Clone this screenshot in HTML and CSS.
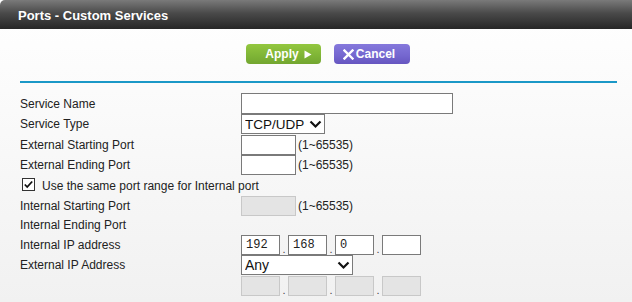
FILE: index.html
```html
<!DOCTYPE html>
<html>
<head>
<meta charset="utf-8">
<link rel="stylesheet" href="styles.css">
</head>
<body>
<div class="header"><span class="title">Ports - Custom Services</span></div>
<div class="content">
  <div class="buttons">
    <button class="btn apply">Apply <svg class="tri" width="8" height="9" viewBox="0 0 8 9"><path d="M0.5 0.5 L7.5 4.5 L0.5 8.5 Z" fill="#fff"/></svg></button>
    <button class="btn cancel"><svg class="x" width="11" height="11" viewBox="0 0 11 11"><path d="M1.5 1.5 L9.5 9.5 M9.5 1.5 L1.5 9.5" stroke="#fff" stroke-width="2.4" stroke-linecap="square"/></svg>Cancel</button>
  </div>
  <div class="rule"></div>
  <div class="form">
    <div class="row r21"><span class="label">Service Name</span><input class="text wide" type="text"></div>
    <div class="row"><span class="label">Service Type</span>
      <span class="sel-wrap"><select class="sel small"><option>TCP/UDP</option></select><svg class="chev" width="13" height="9" viewBox="0 0 13 9"><path d="M1.5 1.5 L6.5 6.5 L11.5 1.5" fill="none" stroke="#111" stroke-width="2.2"/></svg></span>
    </div>
    <div class="row r21"><span class="label">External Starting Port</span><input class="text port" type="text"><span class="range">(1~65535)</span></div>
    <div class="row"><span class="label">External Ending Port</span><input class="text port" type="text"><span class="range">(1~65535)</span></div>
    <div class="row check-row"><span class="cb"><svg width="13" height="13" viewBox="0 0 13 13"><rect x="0.5" y="0.5" width="12" height="12" fill="#fff" stroke="#333"/><path d="M2.8 6.5 L5.2 9 L10.2 3.5" fill="none" stroke="#111" stroke-width="1.8"/></svg></span><span class="cb-label">Use the same port range for Internal port</span></div>
    <div class="row"><span class="label">Internal Starting Port</span><input class="text port disabled" type="text" disabled><span class="range">(1~65535)</span></div>
    <div class="row r18"><span class="label">Internal Ending Port</span></div>
    <div class="row r21"><span class="label">Internal IP address</span>
      <div class="ip">
        <input class="text oct" type="text" value="192"><span class="dot">.</span>
        <input class="text oct" type="text" value="168"><span class="dot">.</span>
        <input class="text oct" type="text" value="0"><span class="dot">.</span>
        <input class="text oct" type="text" value="">
      </div>
    </div>
    <div class="row"><span class="label">External IP Address</span>
      <span class="sel-wrap"><select class="sel any"><option>Any</option></select><svg class="chev" width="13" height="9" viewBox="0 0 13 9"><path d="M1.5 1.5 L6.5 6.5 L11.5 1.5" fill="none" stroke="#111" stroke-width="2.2"/></svg></span>
    </div>
    <div class="row r21"><span class="label"></span>
      <div class="ip">
        <input class="text oct disabled" type="text" disabled><span class="dot">.</span>
        <input class="text oct disabled" type="text" disabled><span class="dot">.</span>
        <input class="text oct disabled" type="text" disabled><span class="dot">.</span>
        <input class="text oct disabled" type="text" disabled>
      </div>
    </div>
  </div>
</div>
</body>
</html>
```

FILE: styles.css
```css
html, body {
  margin: 0;
  padding: 0;
}
body {
  width: 632px;
  height: 302px;
  overflow: hidden;
  font-family: "Liberation Sans", Arial, sans-serif;
  background: linear-gradient(to bottom, #ffffff 0px, #fbfbfb 90px, #f1f1f1 302px);
  color: #222;
}
.header {
  height: 29px;
  background: linear-gradient(to bottom, #7a7a7a 0%, #4a4a4a 45%, #262626 100%);
  border-top-left-radius: 5px;
  display: flex;
  align-items: center;
  padding-left: 18px;
}
.title {
  color: #fff;
  font-weight: bold;
  font-size: 13px;
  padding-top: 1px;
}
.content {
  padding: 15px 0 0 0;
}
.buttons {
  display: flex;
  padding-left: 246px;
  gap: 13px;
  height: 20px;
}
.btn {
  border: none;
  height: 20px;
  padding: 0;
  border-radius: 4px;
  color: #fff;
  font-family: "Liberation Sans", Arial, sans-serif;
  font-weight: bold;
  font-size: 12px;
  display: flex;
  align-items: center;
  justify-content: center;
}
.apply {
  width: 75px;
  background: linear-gradient(to bottom, #93c73f 0%, #7eb436 60%, #73a630 100%);
  gap: 5px;
  padding-left: 10px;
}
.tri {
  display: block;
}
.cancel {
  width: 76px;
  background: linear-gradient(to bottom, #8578dc 0%, #7466cf 60%, #6656c0 100%);
  gap: 2px;
  padding-right: 6px;
}
.x {
  display: block;
}
.rule {
  margin: 17px 15px 0 20px;
  height: 2px;
  background: #1b98c7;
}
.form {
  padding: 10px 0 0 20px;
  font-size: 12px;
}
.row {
  display: flex;
  align-items: center;
  height: 20px;
}
.r21 { height: 21px; }
.r18 { height: 18px; }
.label {
  width: 221px;
  flex: none;
}
.text {
  box-sizing: border-box;
  height: 21px;
  border: 1px solid #7a7a7a;
  background: #fff;
  margin: 0;
  padding: 0 4px;
  font-size: 12px;
}
.wide { width: 212px; }
.port { width: 55px; height: 20px; }
.disabled {
  background: #e4e4e4;
  border-color: #c8c8c8;
}
.range {
  margin-left: 2px;
  font-size: 12px;
}
.sel-wrap {
  position: relative;
  display: inline-block;
  height: 20px;
}
.sel {
  appearance: none;
  -webkit-appearance: none;
  box-sizing: border-box;
  height: 20px;
  border: 1px solid #7a7a7a;
  border-radius: 0;
  background: #fff;
  margin: 0;
  padding: 0 0 0 3px;
  font-family: "Liberation Sans", Arial, sans-serif;
  font-size: 14px;
  color: #111;
}
.small { width: 84px; font-size: 13.5px; }
.any { width: 112px; }
.chev {
  position: absolute;
  right: 3px;
  top: 6px;
  pointer-events: none;
}
.check-row {
  padding-left: 2px;
  height: 21px;
}
.cb {
  width: 13px;
  height: 13px;
  display: block;
  margin-top: -2px;
}
.cb svg { display: block; }
.cb-label {
  margin-left: 7px;
}
.ip {
  display: flex;
  align-items: flex-end;
}
.oct {
  width: 39px;
  font-family: "Liberation Mono", "Courier New", monospace;
  font-size: 12px;
  padding-left: 4px;
  height: 20px;
  color: #222;
}
.dot {
  width: 8px;
  text-align: center;
  font-size: 11px;
  line-height: 10px;
  color: #444;
  padding-bottom: 1px;
}
```
